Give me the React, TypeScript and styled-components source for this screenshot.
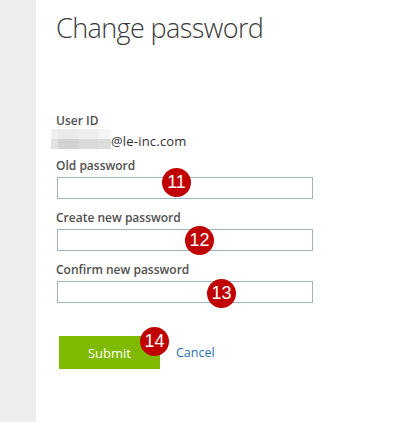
import React from "react";
import styled, { createGlobalStyle } from "styled-components";

const Global = createGlobalStyle`
  html, body { margin: 0; padding: 0; background: #ffffff; }
  body { font-family: "Open Sans", "Liberation Sans", sans-serif; }
`;

const Page = styled.div`
  display: flex;
  min-height: 422px;
  width: 414px;
`;

const Sidebar = styled.div`
  width: 36px;
  flex: none;
  background: #ededed;
`;

const Main = styled.main`
  flex: 1;
  padding: 8px 0 0 20px;
`;

const Title = styled.h1`
  margin: 0;
  font-family: "Open Sans", sans-serif;
  font-weight: 300;
  font-size: 27px;
  line-height: 40px;
  color: #3a3a3a;
  letter-spacing: -0.6px;
`;

const Form = styled.form`
  margin-top: 64px;
  width: 257px;
  display: flex;
  flex-direction: column;
`;

const Label = styled.label`
  display: block;
  font-family: "Open Sans", sans-serif;
  font-weight: 600;
  font-size: 12px;
  line-height: 18px;
  color: #505050;
  margin-bottom: 2px;
`;

const UserRow = styled.div`
  display: flex;
  align-items: flex-end;
  height: 18px;
  margin-bottom: 7px;
  margin-left: -5px;
`;

const Blur = styled.div`
  display: flex;
  flex-direction: column;
  flex: 0 0 60px;
  width: 60px;
  margin-bottom: 1px;
`;

const BlurRow = styled.div`
  display: flex;
  height: 10px;
`;

const Cell = styled.div<{ $c: string; $w: number }>`
  flex: 0 0 ${(p) => p.$w}px;
  height: 10px;
  background: ${(p) => p.$c};
`;

const Email = styled.span`
  font-family: "Open Sans", sans-serif;
  font-size: 13px;
  line-height: 18px;
  letter-spacing: 0.2px;
  color: #333333;
  white-space: nowrap;
`;

const Field = styled.div`
  position: relative;
  margin-bottom: 10px;
`;

const InputWrap = styled.div`
  position: relative;
  margin-left: 1px;
`;

const Input = styled.input`
  display: block;
  box-sizing: border-box;
  width: 256px;
  height: 22px;
  margin: 0;
  border: 1px solid #9fb5c8;
  background: #ffffff;
  outline: none;
  padding: 0 4px;
`;

const Badge = styled.span<{ $x: number; $y: number }>`
  position: absolute;
  left: ${(p) => p.$x}px;
  top: ${(p) => p.$y}px;
  width: 29px;
  height: 29px;
  border-radius: 50%;
  background: #c00000;
  color: #ffffff;
  font-family: "Liberation Sans", Arial, sans-serif;
  font-size: 18px;
  line-height: 29px;
  text-align: center;
  z-index: 2;
`;

const Actions = styled.div`
  display: flex;
  align-items: center;
  gap: 16px;
  margin-top: 23px;
  margin-left: 3px;
`;

const ButtonWrap = styled.div`
  position: relative;
`;

const Submit = styled.button`
  display: block;
  width: 101px;
  height: 33px;
  border: none;
  margin: 0;
  background: #7fba00;
  color: #ffffff;
  font-family: "Open Sans", sans-serif;
  font-size: 13px;
  font-weight: 400;
  cursor: pointer;
`;

const Cancel = styled.a`
  font-family: "Open Sans", sans-serif;
  font-size: 12.5px;
  color: #2b6fb6;
  text-decoration: none;
  cursor: pointer;
`;

const widths = [7, 20, 20, 13];
const blurRows = [
  ["#f1f1f1", "#ebebeb", "#eeeeee", "#f6f6f6"],
  ["#e2e2e2", "#d2d2d2", "#d9d9d9", "#dddddd"],
];

const fields = [
  { label: "Old password", badge: "11", x: 105, y: -9 },
  { label: "Create new password", badge: "12", x: 128, y: -3 },
  { label: "Confirm new password", badge: "13", x: 150, y: -2 },
];

export default function App() {
  return (
    <>
      <Global />
      <Page>
        <Sidebar />
        <Main>
          <Title>Change password</Title>
          <Form onSubmit={(e) => e.preventDefault()}>
            <Label>User ID</Label>
            <UserRow>
              <Blur>
                {blurRows.map((row, r) => (
                  <BlurRow key={r}>
                    {row.map((c, i) => (
                      <Cell key={i} $c={c} $w={widths[i]} />
                    ))}
                  </BlurRow>
                ))}
              </Blur>
              <Email>@le-inc.com</Email>
            </UserRow>
            {fields.map((f) => (
              <Field key={f.label}>
                <Label>{f.label}</Label>
                <InputWrap>
                  <Input type="password" />
                  <Badge $x={f.x} $y={f.y}>{f.badge}</Badge>
                </InputWrap>
              </Field>
            ))}
            <Actions>
              <ButtonWrap>
                <Submit type="submit">Submit</Submit>
                <Badge $x={81} $y={-9}>14</Badge>
              </ButtonWrap>
              <Cancel>Cancel</Cancel>
            </Actions>
          </Form>
        </Main>
      </Page>
    </>
  );
}
